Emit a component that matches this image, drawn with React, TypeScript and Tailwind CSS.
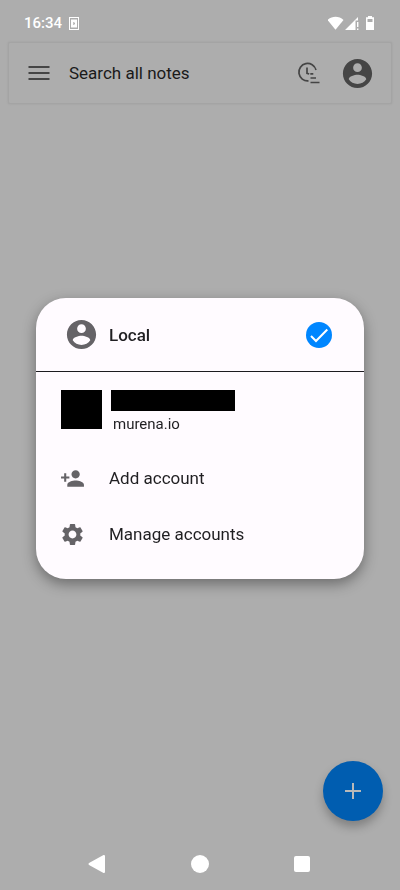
import React from "react";

function AccountCircle({ className }: { className: string }) {
  return (
    <svg viewBox="0 0 24 24" className={className} fill="currentColor" aria-hidden="true">
      <path d="M12 2C6.48 2 2 6.48 2 12s4.48 10 10 10 10-4.48 10-10S17.52 2 12 2zm0 3c1.66 0 3 1.34 3 3s-1.34 3-3 3-3-1.34-3-3 1.34-3 3-3zm0 14.2c-2.5 0-4.71-1.28-6-3.22.03-1.99 4-3.08 6-3.08 1.99 0 5.97 1.09 6 3.08-1.29 1.94-3.5 3.22-6 3.22z" />
    </svg>
  );
}

function StatusBar() {
  return (
    <div className="flex h-[42px] items-center justify-between pt-1 pr-6 pl-6 text-white">
      <div className="flex items-center gap-[7px]">
        <span className="text-[15px] leading-5 font-medium">16:34</span>
        <svg viewBox="0 0 10 13" className="h-[13px] w-[10px]" aria-hidden="true">
          <path fill="white" fillRule="evenodd" d="M0 0h10v13H0zM1 1v11h8V1z" />
          <path fill="white" fillRule="evenodd" d="M2 2.5h6v8H2zM4 5v3h.7V5zM6 5 4.900 6.500 6 8z" />
        </svg>
      </div>
      <svg viewBox="0 0 48 15" className="h-[15px] w-12" fill="white" aria-label="Wi-Fi, signal, battery">
        <path d="M-.5 4C4-.3 11-.3 15.500 4L7.500 13.700Z" />
        <path d="M17 14 30 1v3.500h-2.500V14z" />
        <path d="M29 6h1.400v5H29zM29 12.500h1.400V14H29z" />
        <path fillRule="evenodd" d="M40 0h4v1.300h2V14h-8V1.300h2zM39.500 3v3h5V3z" />
      </svg>
    </div>
  );
}

function SearchBar() {
  return (
    <header className="mx-2 flex h-[62px] items-center rounded-[2px] border border-[#a4a4a4] bg-[#adadad] pr-4 pl-[17px] shadow-[0_0_2px_#9c9c9c]">
      <button aria-label="Menu" className="flex text-[#454545]">
        <svg viewBox="0 0 26 26" className="size-[26px]" fill="currentColor" aria-hidden="true">
          <path d="M2.500 6h21v2h-21zM2.500 12h21v2h-21zM2.500 18h21v2h-21z" />
        </svg>
      </button>
      <input
        type="text"
        aria-label="Search all notes"
        placeholder="Search all notes"
        className="ml-[17px] min-w-0 flex-1 bg-transparent text-[17px] leading-6 text-[#1a1a1a] outline-none placeholder:text-[#1a1a1a]"
      />
      <button aria-label="Sort by time" className="mr-[18px] flex text-[#454545]">
        <svg viewBox="0 0 26 26" className="size-[26px]" fill="none" stroke="currentColor" strokeWidth="1.700" aria-hidden="true">
          <path d="M12.500 20.800A8.700 8.700 0 1 1 20 10M11 7.500v5.800l2.200.7M14.300 13.800h3M14.500 18h5.500M14.500 22.500h9" />
        </svg>
      </button>
      <button aria-label="Account" className="flex text-[#454545]">
        <AccountCircle className="size-[35px]" />
      </button>
    </header>
  );
}

function NavBar() {
  return (
    <nav className="flex h-[52px] items-center justify-around pr-12 pl-11 text-white">
      <button aria-label="Back">
        <svg viewBox="0 0 20 20" className="size-5" fill="currentColor" stroke="currentColor" strokeWidth="2" strokeLinejoin="round" aria-hidden="true">
          <path d="M3.500 10 18 2v16z" />
        </svg>
      </button>
      <button aria-label="Home" className="size-[18px] rounded-full bg-white" />
      <button aria-label="Recent apps" className="size-4 rounded-[2px] bg-white" />
    </nav>
  );
}

function AccountDialog() {
  return (
    <div className="fixed inset-0 flex items-center justify-center px-9 pb-[13px]">
      <section
        role="dialog"
        aria-label="Accounts"
        className="w-full max-w-[420px] overflow-hidden rounded-[30px] bg-[#fffbff] pb-[17px] text-[#201f22] shadow-[0_5px_14px_rgba(0,0,0,0.38)]"
      >
        <button className="flex h-[74px] w-full items-center border-b border-[#1c1b1f] pr-8 pl-7 text-left">
          <AccountCircle className="size-[35px] text-[#656367]" />
          <span className="ml-[10px] flex-1 text-[17px] leading-6 font-medium">Local</span>
          <svg viewBox="0 0 26 26" className="size-[26px]" aria-label="Selected">
            <circle cx="13" cy="13" r="13" fill="#0086ff" />
            <path d="m5 14 5 5L21.300 7.500" fill="none" stroke="white" strokeWidth="2" />
          </svg>
        </button>
        <button className="flex h-[78px] w-full items-start gap-[9px] pt-[18px] pl-[25px] text-left">
          <span className="h-[39px] w-[41px] bg-black" />
          <span className="flex flex-col">
            <span className="h-[21px] w-[124px] bg-black" />
            <span className="mt-[3px] ml-[2px] text-[15px] leading-5">murena.io</span>
          </span>
        </button>
        <button className="flex h-14 w-full items-center gap-6 pl-6 text-left">
          <svg viewBox="0 0 24 24" className="size-[25px] text-[#656367]" fill="currentColor" aria-hidden="true">
            <path d="M15 12c2.210 0 4-1.790 4-4s-1.790-4-4-4-4 1.790-4 4 1.790 4 4 4zm-9-2V7H4v3H1v2h3v3h2v-3h3v-2H6zm9 4c-2.670 0-8 1.340-8 4v2h16v-2c0-2.660-5.330-4-8-4z" />
          </svg>
          <span className="text-[17px] leading-6">Add account</span>
        </button>
        <button className="flex h-14 w-full items-center gap-6 pl-6 text-left">
          <svg viewBox="0.5 0.5 23 23" className="size-[25px] text-[#656367]" fill="currentColor" aria-hidden="true">
            <path d="M19.140 12.940c.040-.300.060-.610.060-.940 0-.320-.020-.640-.070-.940l2.030-1.580c.180-.140.230-.410.120-.610l-1.920-3.320c-.120-.220-.370-.290-.590-.220l-2.390.960c-.500-.380-1.030-.700-1.620-.940l-.360-2.540c-.040-.240-.240-.410-.480-.410h-3.840c-.240 0-.430.170-.470.410l-.360 2.540c-.590.240-1.130.570-1.620.940l-2.390-.960c-.220-.080-.470 0-.590.220L2.740 8.870c-.120.210-.080.470.120.610l2.030 1.580c-.050.300-.090.630-.090.940s.020.640.070.940l-2.030 1.580c-.180.140-.230.410-.120.610l1.920 3.320c.120.220.370.290.590.220l2.390-.960c.500.380 1.030.700 1.620.940l.360 2.540c.050.240.240.410.480.410h3.840c.240 0 .440-.170.470-.410l.360-2.540c.590-.240 1.130-.560 1.620-.940l2.390.960c.220.080.470 0 .590-.220l1.920-3.320c.120-.220.070-.470-.120-.610l-2.010-1.580zM12 15.600c-1.980 0-3.600-1.620-3.600-3.600s1.620-3.600 3.600-3.600 3.600 1.620 3.600 3.600-1.620 3.600-3.600 3.600z" />
          </svg>
          <span className="text-[17px] leading-6">Manage accounts</span>
        </button>
      </section>
    </div>
  );
}

export default function App() {
  return (
    <div className="flex min-h-screen flex-col bg-[#adadad] font-['Roboto',sans-serif]">
      <StatusBar />
      <SearchBar />
      <main className="flex flex-1 items-end justify-end pr-[17px] pb-[17px]">
        <button
          aria-label="New note"
          className="flex size-[60px] items-center justify-center rounded-full bg-[#005db0] text-[#b9b9b9] shadow-[0_6px_10px_rgba(0,0,0,0.25)]"
        >
          <svg viewBox="0 0 16 16" className="size-4" fill="none" stroke="currentColor" strokeWidth="2" aria-hidden="true">
            <path d="M8 0v16M0 8h16" />
          </svg>
        </button>
      </main>
      <NavBar />
      <AccountDialog />
    </div>
  );
}
